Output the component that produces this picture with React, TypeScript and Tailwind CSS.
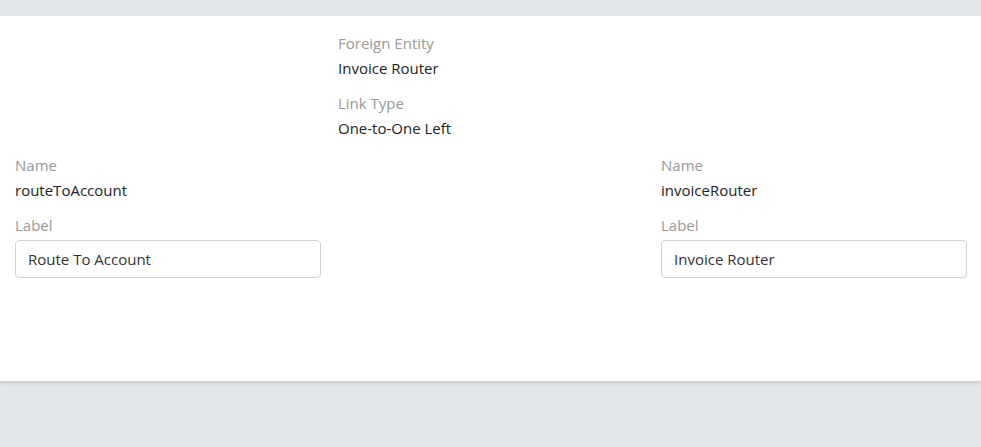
const font = { fontFamily: '"Open Sans", "Liberation Sans", sans-serif' };

function Field({ label, value }: { label: string; value: string }) {
  return (
    <div className="mb-[15px]">
      <div className="text-[15px] leading-5 text-[#999]">{label}</div>
      <div className="mt-[5px] text-[15px] leading-5 text-[#222]">{value}</div>
    </div>
  );
}

function InputField({ label, value }: { label: string; value: string }) {
  return (
    <div className="mb-[15px]">
      <div className="text-[15px] leading-5 text-[#999]">{label}</div>
      <input
        readOnly
        value={value}
        className="mt-[5px] block h-[38px] w-full rounded-[4px] border border-[#d0d0d0] bg-white px-[12px] text-[15px] text-[#333] outline-none"
        style={font}
      />
    </div>
  );
}

export default function App() {
  return (
    <div className="min-h-[447px] bg-[#e4e7ea] pt-[16px]" style={font}>
      <div className="h-[365px] bg-white pl-[15px] pr-[14px] pt-[17px] shadow-[0_2px_4px_rgba(0,0,0,0.12)]">
        <div className="grid grid-cols-3 gap-x-[17px]">
          <div />
          <div>
            <Field label="Foreign Entity" value="Invoice Router" />
            <Field label="Link Type" value="One-to-One Left" />
          </div>
          <div />
          <div className="pt-[2px]">
            <Field label="Name" value="routeToAccount" />
            <InputField label="Label" value="Route To Account" />
          </div>
          <div />
          <div className="pt-[2px]">
            <Field label="Name" value="invoiceRouter" />
            <InputField label="Label" value="Invoice Router" />
          </div>
        </div>
      </div>
    </div>
  );
}
